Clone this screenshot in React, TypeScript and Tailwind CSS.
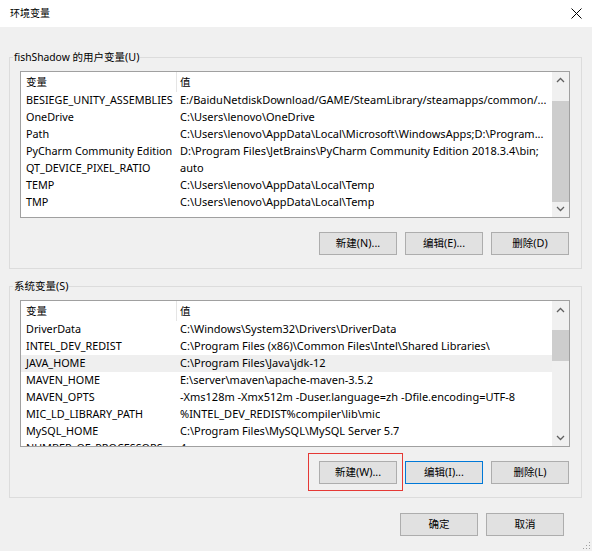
import type { ReactNode } from "react";

// ─── Data ─────────────────────────────────────────────────────────────────────

type EnvVar = { name: string; value: string; selected?: boolean };

const userVars: EnvVar[] = [
    { name: "BESIEGE_UNITY_ASSEMBLIES", value: "E:/BaiduNetdiskDownload/GAME/SteamLibrary/steamapps/common/..." },
    { name: "OneDrive", value: String.raw`C:\Users\lenovo\OneDrive` },
    { name: "Path", value: String.raw`C:\Users\lenovo\AppData\Local\Microsoft\WindowsApps;D:\Program...` },
    { name: "PyCharm Community Edition", value: String.raw`D:\Program Files\JetBrains\PyCharm Community Edition 2018.3.4\bin;` },
    { name: "QT_DEVICE_PIXEL_RATIO", value: "auto" },
    { name: "TEMP", value: String.raw`C:\Users\lenovo\AppData\Local\Temp` },
    { name: "TMP", value: String.raw`C:\Users\lenovo\AppData\Local\Temp` },
];

const systemVars: EnvVar[] = [
    { name: "DriverData", value: String.raw`C:\Windows\System32\Drivers\DriverData` },
    { name: "INTEL_DEV_REDIST", value: String.raw`C:\Program Files (x86)\Common Files\Intel\Shared Libraries\ ` },
    { name: "JAVA_HOME", value: String.raw`C:\Program Files\Java\jdk-12`, selected: true },
    { name: "MAVEN_HOME", value: String.raw`E:\server\maven\apache-maven-3.5.2` },
    { name: "MAVEN_OPTS", value: "-Xms128m -Xmx512m -Duser.language=zh -Dfile.encoding=UTF-8" },
    { name: "MIC_LD_LIBRARY_PATH", value: String.raw`%INTEL_DEV_REDIST%compiler\lib\mic` },
    { name: "MySQL_HOME", value: String.raw`C:\Program Files\MySQL\MySQL Server 5.7` },
    { name: "NUMBER_OF_PROCESSORS", value: "4" },
];

// CJK glyphs in the shot run a bit smaller than the latin text
function Zh({ children }: { children: ReactNode }) {
    return <span className="text-[10.5px]">{children}</span>;
}

// ─── Sub-components ───────────────────────────────────────────────────────────

function Chevron({ down }: { down?: boolean }) {
    return (
        <svg width="9" height="6" viewBox="0 0 9 6" className="block">
            <polyline
                points={down ? "1,1 4.5,4.5 8,1" : "1,5 4.5,1.5 8,5"}
                fill="none"
                stroke="#606060"
                strokeWidth="1.3"
            />
        </svg>
    );
}

function ScrollBar({ thumbTop, thumbHeight }: { thumbTop: number; thumbHeight: number }) {
    return (
        <div className="w-[17px] shrink-0 flex flex-col bg-[#f0f0f0]">
            <div className="h-[17px] flex items-center justify-center">
                <Chevron />
            </div>
            <div className="flex-1 flex flex-col">
                <div style={{ height: thumbTop }} />
                <div className="bg-[#cdcdcd]" style={{ height: thumbHeight }} />
            </div>
            <div className="h-[17px] flex items-center justify-center">
                <Chevron down />
            </div>
        </div>
    );
}

function VarList({ rows, thumbTop, thumbHeight }: { rows: EnvVar[]; thumbTop: number; thumbHeight: number }) {
    return (
        <div className="h-[147px] border border-[#a0a0a0] bg-white flex overflow-hidden">
            <div className="flex-1 min-w-0 overflow-hidden text-[10.8px]">
                <div className="h-[20px] flex items-center">
                    <div className="w-[155px] shrink-0 pl-[5px]">
                        <Zh>变量</Zh>
                    </div>
                    <div className="w-px h-full bg-[#e5e5e5]" />
                    <div className="pl-[3px]">
                        <Zh>值</Zh>
                    </div>
                </div>
                {rows.map((r) => (
                    <div
                        key={r.name}
                        className={`h-[17px] flex items-center whitespace-nowrap ${r.selected ? "bg-[#efefef]" : ""}`}
                    >
                        <div className="w-[156px] shrink-0 pl-[5px] overflow-hidden">{r.name}</div>
                        <div className="pl-[3px] overflow-hidden text-[11px]">{r.value}</div>
                    </div>
                ))}
            </div>
            <ScrollBar thumbTop={thumbTop} thumbHeight={thumbHeight} />
        </div>
    );
}

function Button({ children, focused }: { children: ReactNode; focused?: boolean }) {
    return (
        <button
            className={`w-[78px] h-[23px] flex items-center justify-center bg-[#e1e1e1] border ${
                focused ? "border-[#0078d7]" : "border-[#adadad]"
            }`}
        >
            {children}
        </button>
    );
}

function GroupBox({ label, children }: { label: ReactNode; children: ReactNode }) {
    return (
        <fieldset className="min-w-0 border border-[#dcdcdc] ml-[9px] mr-[10px] pl-[10px] pr-[11px] pb-[13px]">
            <legend className="-ml-[7px] px-[1px] leading-[16px]">{label}</legend>
            <div className="pt-[6px]">{children}</div>
        </fieldset>
    );
}

// ─── App ──────────────────────────────────────────────────────────────────────

export default function App() {
    return (
        <div
            className="w-[592px] h-[551px] bg-[#f0f0f0] text-[10.8px] text-black flex flex-col relative overflow-hidden"
            style={{ fontFamily: '"Noto Sans", "Noto Sans CJK SC", sans-serif' }}
        >
            {/* title bar */}
            <div className="h-[27px] bg-white flex items-center justify-between pl-[10px] pr-[10px]">
                <span className="text-[10px]">环境变量</span>
                <svg width="11" height="11" viewBox="0 0 11 11">
                    <path d="M0.5 0.5 L10.5 10.5 M10.5 0.5 L0.5 10.5" stroke="#000" strokeWidth="1" />
                </svg>
            </div>

            <div className="pt-[22px] flex flex-col">
                <GroupBox
                    label={
                        <>
                            <span className="text-[10.3px]">fishShadow</span> <Zh>的用户变量</Zh>(U)
                        </>
                    }
                >
                    <VarList rows={userVars} thumbTop={13} thumbHeight={101} />
                    <div className="flex justify-end gap-[8px] mt-[14px] pr-[1px]">
                        <Button>
                            <Zh>新建</Zh>(N)...
                        </Button>
                        <Button>
                            <Zh>编辑</Zh>(E)...
                        </Button>
                        <Button>
                            <Zh>删除</Zh>(D)
                        </Button>
                    </div>
                </GroupBox>

                <div className="h-[9px]" />

                <GroupBox
                    label={
                        <>
                            <Zh>系统变量</Zh>(S)
                        </>
                    }
                >
                    <VarList rows={systemVars} thumbTop={12} thumbHeight={31} />
                    <div className="flex justify-end gap-[8px] mt-[14px] pr-[1px]">
                        <div className="relative">
                            <Button>
                                <Zh>新建</Zh>(W)...
                            </Button>
                            <span className="absolute -left-[11px] -right-[6px] -top-[8px] -bottom-[7px] border border-[#e53935] pointer-events-none" />
                        </div>
                        <Button focused>
                            <Zh>编辑</Zh>(I)...
                        </Button>
                        <Button>
                            <Zh>删除</Zh>(L)
                        </Button>
                    </div>
                </GroupBox>

                <div className="flex justify-end gap-[8px] mt-[15px] pr-[28px]">
                    <Button>
                        <Zh>确定</Zh>
                    </Button>
                    <Button>
                        <Zh>取消</Zh>
                    </Button>
                </div>
            </div>

            {/* size grip */}
            <svg width="10" height="10" viewBox="0 0 10 10" className="absolute right-[1px] bottom-[1px]">
                {[
                    [8, 2],
                    [8, 5],
                    [5, 5],
                    [8, 8],
                    [5, 8],
                    [2, 8],
                ].map(([x, y]) => (
                    <rect key={`${x}-${y}`} x={x} y={y} width="1" height="1" fill="#a0a0a0" />
                ))}
            </svg>
        </div>
    );
}
